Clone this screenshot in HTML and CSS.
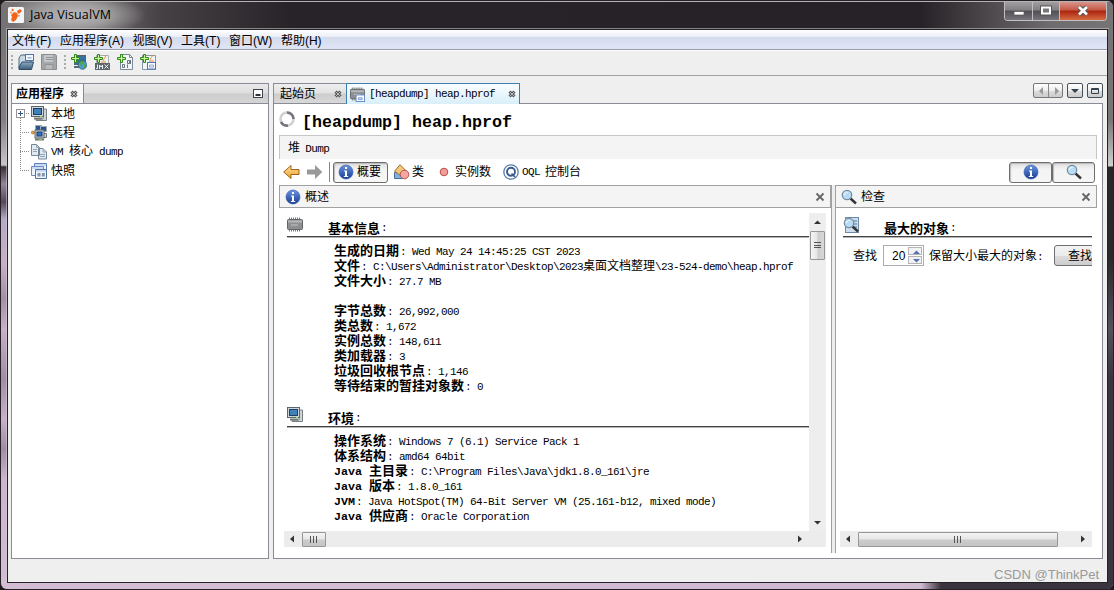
FILE: index.html
```html
<!DOCTYPE html>
<html lang="zh-CN">
<head>
    <meta charset="UTF-8">
    <title>Java VisualVM</title>
    <link rel="stylesheet" href="styles.css">
</head>
<body>
    <!-- shared icons -->
    <svg class="defs" width="0" height="0">
        <linearGradient id="blue" x1="0" y1="0" x2="0" y2="1"><stop offset="0" stop-color="#6c95df"/><stop offset="1" stop-color="#173b94"/></linearGradient>
        <linearGradient id="gold" x1="0" y1="0" x2="0" y2="1"><stop offset="0" stop-color="#ffe3a0"/><stop offset="1" stop-color="#ee9b25"/></linearGradient>
        <linearGradient id="steel" x1="0" y1="0" x2="0" y2="1"><stop offset="0" stop-color="#8cabc4"/><stop offset="1" stop-color="#3d5c78"/></linearGradient>
        <symbol id="i-info" viewBox="0 0 16 16">
            <circle cx="8" cy="8" r="7" fill="url(#blue)" stroke="#2b55ac" stroke-width=".6"/>
            <path d="M7 3h2v2H7zM6 6.500h3V12h1.200v1H5.800v-1H7V7.500H6z" fill="#fff"/>
        </symbol>
        <symbol id="i-search" viewBox="0 0 16 16">
            <path d="M9.500 9.500L15 14.500" stroke="#333" stroke-width="2.400"/>
            <circle cx="6" cy="6" r="4.700" fill="#b9dbf3" stroke="#7590a5" stroke-width="1.300"/>
            <path d="M3.500 6a2.500 2.500 0 0 1 3-2.500" stroke="#fff" fill="none"/>
        </symbol>
        <symbol id="i-close" viewBox="0 0 8 8">
            <path d="M1.500 1.500l5 5M6.500 1.500l-5 5" stroke="#555" stroke-width="3"/>
            <path d="M1.500 1.500l5 5M6.500 1.500l-5 5" stroke="#ccc" stroke-width=".9"/>
        </symbol>
        <symbol id="i-x" viewBox="0 0 10 10"><path d="M1.500 1.500l7 7M8.500 1.500l-7 7" stroke="#666" stroke-width="1.800"/></symbol>
        <symbol id="i-plus" viewBox="0 0 9 9"><path d="M3.500.5h2v3h3v2h-3v3h-2v-3h-3v-2h3z" fill="#c9f59a" stroke="#2c8a12"/></symbol>
        <symbol id="i-host" viewBox="0 0 16 16">
            <path d="M12 3h3.500v11.500H5V13h7z" fill="#cfd3d4" stroke="#7a8286"/>
            <rect x=".5" y=".5" width="12" height="10" fill="#d0d5d8" stroke="#5a666e"/>
            <rect x="2.500" y="2.500" width="8" height="6" fill="#3f82b8" stroke="#1c3e74"/>
            <path d="M3 12.500h8" stroke="#777" stroke-width="2"/><path d="M9 10h2v1H9z" fill="#6f2"/>
        </symbol>
        <symbol id="i-remote" viewBox="0 0 16 16">
            <rect x="4.500" y=".5" width="6" height="5" fill="#27558e" stroke="#a4abb0"/>
            <rect x="9.500" y="1.500" width="6" height="5" fill="#27558e" stroke="#a4abb0"/>
            <path d="M12 8.500h3.500v4H12" fill="#c9ced1" stroke="#777"/>
            <rect x="4" y="5" width="9" height="8" fill="#c4cace" stroke="#5b666d"/>
            <rect x="6" y="7" width="5" height="4" fill="#2f74b4" stroke="#1c3e74"/>
            <path d="M4 14.500h9" stroke="#777" stroke-width="2"/><path d="M8 14h3v1H8z" fill="#6d2"/>
            <path d="M1 7.500h3" stroke="#555"/><circle cx="1.800" cy="7.500" r="1.500" fill="#f2a43a" stroke="#99601a" stroke-width=".6"/>
        </symbol>
        <symbol id="i-dump" viewBox="0 0 16 16">
            <path d="M.5.5h5l3 3v8h-8zM7.500 4.500h4.500l3.500 3.500v7h-8z" fill="#e2e9ef" stroke="#71879c"/>
            <path d="M5.500.5v3h3M12 4.500V8h3.500M2 5.500h4M2 7.500h4M9 10.500h5M9 12.500h5" fill="none" stroke="#94a4b4"/>
        </symbol>
        <symbol id="i-snap" viewBox="0 0 16 16">
            <path d="M3.500.5h12v9h-12z" fill="#eef4fb" stroke="#5d80bd"/>
            <path d="M.5 3.500h12v9H.5z" fill="#eef4fb" stroke="#6d8cc0"/>
            <path d="M4.500 6.500h11v9h-11z" fill="#eef4fb" stroke="#54749f"/>
            <path d="M4 2h11M1 5h11M5 8h10" stroke="#a9c3e8"/><path d="M6.500 10h3v3.500h-3zM10.800 10h3v3.500h-3z" fill="#8298a9"/>
        </symbol>
        <symbol id="i-chip" viewBox="0 0 16 16">
            <path d="M2 1.500h12M2 13.500h12" stroke="#777" stroke-width="2" stroke-dasharray="1 1"/>
            <rect x=".5" y="2.500" width="15" height="10" rx="1" fill="#8d8f91" stroke="#626466"/>
            <path d="M1 4.500h14" stroke="#b5b7b8" stroke-width="2"/><path d="M4 8h7" stroke="#c4c4c4"/>
        </symbol>
        <symbol id="i-heap" viewBox="0 0 16 16">
            <use href="#i-chip" width="16" height="16"/>
            <rect x="6.500" y="8.500" width="9" height="7" fill="#fff" stroke="#6688c6"/><path d="M9 11.500h4v2H9z" fill="#dce9ff" stroke="#7797cd"/>
        </symbol>
    </svg>

    <div class="window">
        <div class="titlebar">
            <svg class="logo" width="16" height="16" viewBox="0 0 16 16">
                <rect width="16" height="16" rx="1.500" fill="#f2f6f7"/>
                <path d="M6 5l3 1 1 3-2 4-3 2-2-2 1-3-1-2z" fill="#f2641d"/>
                <path d="M9 4l3-2 2 2-2 2-2 1zM4 1.500l2 1-1 2-1.500-1zM10 8l2 .5-1 1.500z" fill="#f2641d"/>
                <circle cx="3" cy="5.500" r="1" fill="#f58a4e"/>
            </svg>
            <span class="title">Java VisualVM</span>
            <div class="win-buttons">
                <span class="win-btn min"><svg width="12" height="12"><rect x="1" y="6.500" width="10" height="3.500" fill="#fff" stroke="#555" stroke-width=".7"/></svg></span>
                <span class="win-btn max"><svg width="12" height="12"><rect x="1.500" y="2" width="9" height="7" fill="#555" stroke="#555" stroke-width="3"/><rect x="2" y="2.500" width="8" height="6" fill="#777" stroke="#fff" stroke-width="2"/></svg></span>
                <span class="win-btn close"><svg width="12" height="12"><path d="M2 2l8 7.500M10 2L2 9.500" stroke="#555" stroke-width="4.500"/><path d="M2 2l8 7.500M10 2L2 9.500" stroke="#fff" stroke-width="2.700"/></svg></span>
            </div>
        </div>

        <div class="middle">
            <div class="edge edge-left"></div>
            <div class="client">
                <div class="menubar">
                    <span>文件(F)</span><span>应用程序(A)</span><span>视图(V)</span><span>工具(T)</span><span>窗口(W)</span><span>帮助(H)</span>
                </div>
                <div class="toolbar">
                    <i class="grip"></i>
                    <svg width="16" height="16" viewBox="0 0 16 16">
                        <path d="M1 14V4l2-3h4l1 3h5v10z" fill="#cbd9e4" stroke="#4c6a82"/>
                        <rect x="7.500" y=".5" width="8" height="6" fill="#f2f7ff" stroke="#5374aa"/><path d="M9.500 3h4v1.500h-4z" fill="#9fb7dd"/>
                        <path d="M1 15.500V13l3-5h11.500l-2 7.500z" fill="url(#steel)" stroke="#2f4b64"/>
                    </svg>
                    <svg width="16" height="16" viewBox="0 0 16 16">
                        <path d="M.5.5h14l1 1v14H.5z" fill="#a4a7aa" stroke="#8b8e91"/>
                        <path d="M3 1h9v7H3z" fill="#c4c6c8"/><path d="M5 3.500h7M5 5.500h7" stroke="#94979a"/><path d="M4 10.500h8v5H4z" fill="#b8babc" stroke="#909396"/>
                    </svg>
                    <i class="grip second"></i>
                    <svg width="16" height="16" viewBox="0 0 16 16">
                        <rect x="3.500" y="1.500" width="11" height="9" fill="#39719d" stroke="#56636c"/><path d="M3 13h7" stroke="#5c6972" stroke-width="2"/>
                        <circle cx="11.500" cy="11" r="4.300" fill="#4f9cc6" stroke="#28587b" stroke-width=".7"/><path d="M9 8l3-1 1 2-2 2-1 2zM13 11l2-1v3l-2 1z" fill="#4fa83a"/>
                        <use href="#i-plus" width="9" height="9"/>
                    </svg>
                    <svg width="16" height="16" viewBox="0 0 16 16">
                        <path d="M2.500 1.500h12v13h-12z" fill="#f2f2f2" stroke="#a9adb0"/><path d="M10 7c-2-2 3-3 1-6M7 8h5" fill="none" stroke="#e48a36"/>
                        <path d="M1 9h15v7H1z" fill="#5e666d"/><path d="M3.500 10.500v4H2M5.500 15v-4l1.500 2 1.500-2v4M10.500 10.500l4 4M14.500 10.500l-4 4" fill="none" stroke="#fff" stroke-width=".9"/>
                        <use href="#i-plus" width="9" height="9"/>
                    </svg>
                    <svg width="16" height="16" viewBox="0 0 16 16">
                        <path d="M3.500.5h9l3 3v12h-12z" fill="#f3f5f6" stroke="#7c8b98"/><path d="M12.500.5v3h3" fill="none" stroke="#7c8b98"/>
                        <path d="M5.500 10.500h2v3h-2zM10.500 6.500h2v3h-2zM13.500 6v4M10.500 10.500v3.500" fill="none" stroke="#69747d"/>
                        <use href="#i-plus" width="9" height="9"/>
                    </svg>
                    <svg width="16" height="16" viewBox="0 0 16 16">
                        <path d="M2.500 1.500h13v14h-13z" fill="#f1f5fa" stroke="#8996a6"/><path d="M11 6c-2-2 2-2 1-5M9 7h5" fill="none" stroke="#e48a36"/>
                        <rect x="7.500" y="8.500" width="8" height="6.500" fill="#fff" stroke="#4c73b8"/><path d="M9.500 11h4v2h-4z" fill="#fff" stroke="#86a5d9"/>
                        <use href="#i-plus" width="9" height="9"/>
                    </svg>
                </div>

                <div class="workspace">
                    <div class="side">
                        <div class="side-head">
                            <div class="side-tab"><b>应用程序</b><svg width="8" height="8"><use href="#i-close"/></svg></div>
                            <svg class="minimize" width="10" height="9"><rect x=".5" y=".5" width="9" height="8" fill="#fff" stroke="#3b4450"/><path d="M2.500 6h5" stroke="#333" stroke-width="2"/></svg>
                        </div>
                        <div class="tree">
                            <div class="node"><i class="expander"></i><svg width="16" height="16"><use href="#i-host"/></svg><span>本地</span></div>
                            <div class="node"><svg width="16" height="16"><use href="#i-remote"/></svg><span>远程</span></div>
                            <div class="node"><svg width="16" height="16"><use href="#i-dump"/></svg><span class="sim">VM <em>核心</em> dump</span></div>
                            <div class="node"><svg width="16" height="16"><use href="#i-snap"/></svg><span>快照</span></div>
                        </div>
                    </div>

                    <div class="main">
                        <div class="tabs">
                            <div class="tab start"><span>起始页</span><svg width="8" height="8"><use href="#i-close"/></svg></div>
                            <div class="tab active"><svg width="15" height="15"><use href="#i-heap"/></svg><span class="sim">[heapdump] heap.hprof</span><svg width="8" height="8"><use href="#i-close"/></svg></div>
                            <div class="tab-ctl">
                                <span class="pair"><svg width="14" height="13"><path d="M9 3v8L5 7z" fill="#999"/></svg><svg width="14" height="13"><path d="M6 3v8l4-4z" fill="#999"/></svg></span>
                                <span><svg width="14" height="13"><path d="M3 5h8L7 9z" fill="#34424e"/></svg></span>
                                <span><svg width="14" height="13"><path d="M3.500 4.500h7v5h-7zM3 5.500h8" fill="none" stroke="#34424e"/></svg></span>
                            </div>
                        </div>
                        <div class="view">
                            <div class="view-title">
                                <svg width="16" height="16" viewBox="0 0 16 16" fill="none" stroke-width="2.600"><circle cx="8" cy="8" r="6.500" stroke="#d0d0d4"/><path d="M8 1.500A6.500 6.500 0 0 1 14.500 8M9 14.500A6.500 6.500 0 0 1 2 11" stroke="#77777d"/></svg>
                                <h1>[heapdump] heap.hprof</h1>
                            </div>
                            <div class="dump-bar">堆 <span class="sim">Dump</span></div>
                            <div class="nav">
                                <svg class="back" width="17" height="16"><path d="M.7 8L8 1.500V5.500h8v5H8v4z" fill="url(#gold)" stroke="#9d6418"/></svg>
                                <svg class="fwd" width="17" height="16"><path d="M16.300 8L9 1v4.500H1v5h8V15z" fill="#999"/></svg>
                                <i class="sep"></i>
                                <span class="btn on"><svg width="16" height="16"><use href="#i-info"/></svg><span>概要</span></span>
                                <span class="item classes"><svg width="17" height="16"><path d="M1.500 8.500h8v6h-8z" fill="#7fb1df" stroke="#44719e"/><path d="M7 .7l6 6-5 5-6.500-4.500z" fill="#f3c67b" stroke="#a3712b"/><circle cx="11.500" cy="10.500" r="4.300" fill="#f7a5a0" stroke="#b0504b"/></svg><span>类</span></span>
                                <span class="item inst"><svg width="10" height="10"><circle cx="5" cy="5" r="3.800" fill="#f59c98" stroke="#b0504b"/></svg><span>实例数</span></span>
                                <span class="item oql"><svg width="16" height="16"><circle cx="8" cy="8" r="7.200" fill="#fff" stroke="#557cac" stroke-width="1.300"/><circle cx="8" cy="7.700" r="4" fill="none" stroke="#3a5c8c" stroke-width="1.900"/><path d="M8.500 9.500l3.500 3.500" stroke="#3a5c8c" stroke-width="1.700"/></svg><span class="sim">OQL</span><span>控制台</span></span>
                                <span class="btn on right first"><svg width="16" height="16"><use href="#i-info"/></svg></span>
                                <span class="btn on right"><svg width="16" height="16"><use href="#i-search"/></svg></span>
                            </div>

                            <div class="split">
                                <div class="panel overview">
                                    <div class="panel-head"><svg width="16" height="16"><use href="#i-info"/></svg><span>概述</span><svg class="x" width="10" height="10"><use href="#i-x"/></svg></div>
                                    <div class="scroll">
                                        <div class="row">
                                            <div class="text">
                                                <div class="sec-head"><svg width="16" height="16"><use href="#i-chip"/></svg><b>基本信息</b>:</div>
                                                <p><b>生成的日期</b>: Wed May 24 14:45:25 CST 2023</p>
                                                <p><b>文件</b>: C:\Users\Administrator\Desktop\2023<em>桌面文档整理</em>\23-524-demo\heap.hprof</p>
                                                <p><b>文件大小</b>: 27.7 MB</p>
                                                <p>&nbsp;</p>
                                                <p><b>字节总数</b>: 26,992,000</p>
                                                <p><b>类总数</b>: 1,672</p>
                                                <p><b>实例总数</b>: 148,611</p>
                                                <p><b>类加载器</b>: 3</p>
                                                <p><b>垃圾回收根节点</b>: 1,146</p>
                                                <p><b>等待结束的暂挂对象数</b>: 0</p>
                                                <div class="sec-head env"><svg width="16" height="16"><use href="#i-host"/></svg><b>环境</b>:</div>
                                                <p><b>操作系统</b>: Windows 7 (6.1) Service Pack 1</p>
                                                <p><b>体系结构</b>: amd64 64bit</p>
                                                <p><b><i>Java </i>主目录</b>: C:\Program Files\Java\jdk1.8.0_161\jre</p>
                                                <p><b><i>Java </i>版本</b>: 1.8.0_161</p>
                                                <p><b><i>JVM</i></b>: Java HotSpot(TM) 64-Bit Server VM (25.161-b12, mixed mode)</p>
                                                <p><b><i>Java </i>供应商</b>: Oracle Corporation</p>
                                            </div>
                                            <div class="vbar">
                                                <svg width="17" height="17"><path d="M5 11h7L8.500 7.500z" fill="#333"/></svg>
                                                <div class="thumb"><i></i></div>
                                                <svg class="end" width="17" height="17"><path d="M5 7h7l-3.500 3.500z" fill="#333"/></svg>
                                            </div>
                                        </div>
                                        <div class="hbar">
                                            <svg width="18" height="16"><path d="M10 4.500v7L6 8z" fill="#333"/></svg>
                                            <div class="thumb"><i></i></div>
                                            <svg class="end" width="17" height="16"><path d="M6 4.500v7L10 8z" fill="#333"/></svg>
                                        </div>
                                    </div>
                                </div>
                                <div class="divider"></div>
                                <div class="panel inspect">
                                    <div class="panel-head"><svg width="16" height="16"><use href="#i-search"/></svg><span>检查</span><svg class="x" width="10" height="10"><use href="#i-x"/></svg></div>
                                    <div class="scroll">
                                        <div class="text">
                                            <div class="sec-head"><svg width="16" height="16"><rect x="2.500" y=".5" width="13" height="15" fill="#cfdeec" stroke="#6d89a5"/><path d="M10 4h4M11 7h3M11 10h3" stroke="#54789b"/><use href="#i-search" width="16" height="16"/></svg><b>最大的对象</b>:</div>
                                            <div class="find">
                                                <span>查找</span>
                                                <div class="spinner">20<div class="arrows"><svg width="14" height="8"><path d="M4 6h7L7.500 2.500z" fill="#5570b4"/></svg><svg width="14" height="8"><path d="M4 2h7L7.500 5.500z" fill="#5570b4"/></svg></div></div>
                                                <span>保留大小最大的对象<tt>:</tt></span>
                                                <div class="find-btn">查找</div>
                                            </div>
                                        </div>
                                        <div class="hbar">
                                            <svg width="18" height="16"><path d="M10 4.500v7L6 8z" fill="#333"/></svg>
                                            <div class="thumb"><i></i></div>
                                            <svg class="end" width="17" height="16"><path d="M6 4.500v7L10 8z" fill="#333"/></svg>
                                        </div>
                                    </div>
                                </div>
                            </div>
                        </div>
                    </div>
                </div>
                <div class="status">CSDN @ThinkPet</div>
            </div>
            <div class="edge edge-right"></div>
        </div>
        <div class="bottom"></div>
    </div>
</body>
</html>
```
FILE: styles.css
```css
* {
    box-sizing: border-box;
}

body {
    margin: 0;
    width: 1114px;
    height: 590px;
    overflow: hidden;
    background: #1d1a1e;
    color: #000;
    font: 12px/15px "Liberation Sans", "Noto Sans CJK SC", sans-serif;
}

svg {
    flex: none;
    display: block;
}

.defs {
    position: absolute;
}

em, i {
    font-style: normal;
}

/* Window frame */
.window {
    display: flex;
    flex-direction: column;
    width: 1114px;
    height: 590px;
    border: 1px solid #242026;
    border-radius: 7px;
    overflow: hidden;
    background: #777;
}

.titlebar {
    display: flex;
    height: 28px;
    padding: 0 7px;
    border-top: 1px solid #b5b3b4;
    background: radial-gradient(ellipse 70px 22px at 75px 13px, #bbb9ba 0, rgba(170,168,169,.8) 50%, transparent 100%),
        linear-gradient(90deg, #767274 0, #807d7e 70px, #464145 160px, #282328 290px, #272227 920px, #6f6c6e 1050px, #777476 100%);
}

.logo {
    margin-top: 5px;
}

.title {
    margin: 5px 0 0 6px;
    font: 12.5px/16px "Open Sans", "Noto Sans", sans-serif;
    letter-spacing: .1px;
}

.win-buttons {
    display: flex;
    height: 19px;
    margin-left: auto;
    margin-right: -1px;
    border: 1px solid #c1bfc1;
    border-top: 0;
    border-radius: 0 0 4px 4px;
    overflow: hidden;
}

.win-btn {
    display: flex;
    align-items: center;
    justify-content: center;
    width: 27px;
    background: linear-gradient(#a09d9f, #828083 45%, #514f54 50%, #77757b);
}

.win-btn + .win-btn {
    border-left: 1px solid #c1bfc1;
}

.win-btn.close {
    width: 47px;
    background: linear-gradient(#d8958c, #c75844 45%, #ab240e 50%, #d56c43);
}

.middle {
    display: flex;
    height: 554px;
}

.edge {
    width: 6px;
}

.edge-left {
    background: linear-gradient(#777476 0, #827d80 90px, #c7c3c6 136px, #382f38 138px, #94859a 155px, #54485a 173px, #b5a9c8 190px, #c8adc8 235px, #a58fa5 270px, #c9afc9 300px, #a38ca5 350px, #c9afc9 390px, #a18ba3 420px, #cdb3cf 450px, #d4bcd5 100%);
}

.edge-right {
    width: 5px;
    background: linear-gradient(#777476 0, #777476 90px, #d0d0d0 137px, #29252b 138px, #2d282f 230px, #55505a 300px, #3b343e 350px, #3b343e 100%);
}

.bottom {
    height: 6px;
    background: linear-gradient(90deg, #d2bdd4 0, #cfbad1 920px, #3b343e 940px);
}

/* Client area */
.client {
    display: flex;
    flex-direction: column;
    width: 1101px;
    border: 1px solid #242127;
    outline: 1px solid rgba(210,205,210,.55);
    background: #efefef;
}

.menubar {
    display: flex;
    flex: none;
    gap: 8.6px;
    height: 20px;
    padding-left: 4px;
    border-bottom: 1px solid #999ba7;
    background: linear-gradient(#fff, #eaeef6 35%, #d4dbed 38%, #dfe5f6);
    line-height: 22px;
}

.toolbar {
    display: flex;
    flex: none;
    align-items: center;
    height: 26px;
    padding: 0 3px 2px;
    border-top: 1px solid #fff;
    border-bottom: 1px solid #a0a0a0;
}

.toolbar svg {
    margin-right: 6px;
}

.toolbar svg + svg {
    margin-left: 1px;
}

.grip {
    width: 2px;
    height: 15px;
    margin-right: 5px;
    background: repeating-linear-gradient(#aaa 0 2px, transparent 2px 4px);
}

.grip.second {
    margin-left: 1px;
    margin-right: 5px;
}

.workspace {
    display: flex;
    flex: none;
    gap: 4px;
    height: 483px;
    padding: 7px 3px 0;
}

/* Applications tree */
.side {
    width: 258px;
    height: 476px;
    border: 1px solid #898c95;
    background: #fff;
}

.side-head {
    display: flex;
    align-items: center;
    justify-content: space-between;
    height: 20px;
    padding-right: 5px;
    border-bottom: 1px solid #898c95;
    background: linear-gradient(#e9e9e9, #dedede 48%, #cdcdcd 52%, #d5d5d5);
}

.side-tab {
    display: flex;
    align-items: center;
    gap: 6px;
    width: 72px;
    height: 19px;
    padding-left: 4px;
    border-right: 1px solid #898c95;
    background: #fafafa;
}

.side-tab b {
    width: 48px;
    padding-top: 2px;
}

.tree {
    padding: 0 0 0 3px;
    background: repeating-linear-gradient(#888 0 1px, transparent 1px 2px) 8px 8px / 1px 59px no-repeat;
}

.node {
    display: flex;
    align-items: center;
    gap: 4px;
    height: 19px;
    padding-left: 16px;
    background: repeating-linear-gradient(90deg, #888 0 1px, transparent 1px 2px) 5px 9px / 10px 1px no-repeat;
}

.node span {
    padding-top: 2px;
}

.expander {
    width: 9px;
    height: 9px;
    margin: 0 2px 0 -15px;
    border: 1px solid #939393;
    background: linear-gradient(#36558f, #36558f) center / 5px 1px no-repeat, linear-gradient(#36558f, #36558f) center / 1px 5px no-repeat, #fff;
}

/* Fixed-pitch latin text, with CJK runs at full size */
.sim,
.text p,
.sec-head,
tt {
    font-family: "Liberation Mono", "Noto Sans CJK SC", monospace;
    font-size: 11px;
    letter-spacing: -.6px;
}

.sim em,
.text em {
    font-size: 12px;
    letter-spacing: 0;
}

/* Document tabs */
.main {
    display: flex;
    flex-direction: column;
    width: 830px;
    height: 476px;
}

.tabs {
    display: flex;
    height: 20px;
}

.tab {
    display: flex;
    align-items: center;
    height: 20px;
    border: 1px solid #898c95;
    border-bottom: 0;
}

.tab.start {
    width: 73px;
    padding-left: 6px;
    gap: 18px;
    border-right: 0;
    background: linear-gradient(#eee, #e2e2e2 48%, #cdcdcd 52%, #d8d8d8);
}

.tab.start span {
    padding-top: 2px;
}

.tab.active {
    position: relative;
    width: 174px;
    height: 21px;
    padding-left: 3px;
    gap: 4px;
    border-color: #3c7fb1;
    background: linear-gradient(#fafdff, #eaf6fc 50%, #d9eff9);
}

.tab.active .sim {
    width: 135px;
    padding-top: 1px;
    white-space: nowrap;
}

.tab-ctl {
    display: flex;
    gap: 4px;
    height: 15px;
    margin-left: auto;
}

.tab-ctl > span {
    display: flex;
    border: 1px solid #454f59;
    border-radius: 2px;
    background: linear-gradient(#fff, #eee 50%, #ddd 52%, #ccc);
}

.tab-ctl > .pair {
    border-color: #777;
}

.pair svg + svg {
    border-left: 1px solid #888;
}

.view {
    flex: 1;
    padding: 0 5px;
    border: 1px solid #898c95;
    background: #fff;
}

.view-title {
    display: flex;
    gap: 7px;
    height: 31px;
    padding-top: 7px;
}

.view-title h1 {
    margin: 3px 0 0;
    font: bold 16.667px/18px "Liberation Mono", monospace;
}

.dump-bar {
    height: 24px;
    padding: 5px 8px 0;
    border: 1px solid #c6c6c6;
    border-bottom: 0;
    background: #f4f4f4;
}

.dump-bar .sim {
    margin-left: 2px;
}

.nav {
    display: flex;
    align-items: center;
    height: 26px;
}

.back {
    margin-left: 4px;
}

.fwd {
    margin-left: 6px;
}

.sep {
    width: 1px;
    height: 20px;
    margin: 0 3px 0 6px;
    background: #888;
}

.btn {
    display: flex;
    align-items: center;
    justify-content: center;
    gap: 3px;
    width: 55px;
    height: 21px;
    border: 1px solid #6e6e6e;
    border-radius: 3px;
    background: linear-gradient(#dedede, #f4f4f4 35%, #f6f6f6);
    box-shadow: inset 1px 1px 1px #bbb;
}

.nav > .btn:not(.right) {
    padding-right: 2px;
}

.btn span,
.item span {
    padding-top: 1px;
}

.btn.right {
    width: 43px;
    margin-right: 2px;
}

.btn.right.first {
    margin-left: auto;
    margin-right: 0;
}

.item {
    display: flex;
    align-items: center;
    gap: 3px;
}

.classes {
    margin-left: 5px;
}

.classes svg {
    margin-right: -1px;
}

.inst {
    margin-left: 15px;
    gap: 6px;
}

.oql {
    margin-left: 12px;
    gap: 3px;
}

.oql .sim {
    margin-right: 2px;
}

/* Overview and inspect panels */
.split {
    display: flex;
    height: 368px;
}

.panel-head {
    display: flex;
    align-items: center;
    gap: 4px;
    height: 23px;
    padding: 0 5px;
    border: 1px solid #a0a0a0;
    background: #f4f4f4;
}

.panel-head span {
    padding-top: 2px;
}

.panel-head .x {
    margin-left: auto;
}

.overview {
    width: 552px;
}

.divider {
    width: 5px;
    border: 1px solid #a0a0a0;
    border-width: 0 1px;
    background: #eee;
}

.inspect {
    width: 261px;
}

.inspect .panel-head {
    border-left: 0;
}

.scroll {
    padding: 5px 5px 0;
}

.row {
    display: flex;
}

.text {
    height: 318px;
    overflow: hidden;
}

.row .text {
    width: 525px;
    padding: 4px 0 0 3px;
}

.sec-head {
    display: flex;
    height: 20px;
    margin-bottom: 6px;
    border-bottom: 1px solid #444;
    box-shadow: 0 1px #b5b5b5;
    line-height: 23px;
}

.sec-head svg {
    margin: 0 25px 0 0;
}

.sec-head.env {
    margin-top: 14px;
}

.text p {
    height: 15px;
    margin: 0;
    padding-left: 47px;
    white-space: pre;
}

.text b {
    margin-right: 1px;
    font: bold 13px/15px "Liberation Sans", "Noto Sans CJK SC", sans-serif;
    letter-spacing: 0;
}

.text .sec-head b {
    line-height: 23px;
}

.text b i {
    font: bold 11.667px/15px "Liberation Mono", monospace;
}

/* Scrollbars */
.vbar {
    display: flex;
    flex-direction: column;
    width: 17px;
    background: #eee;
}

.vbar .thumb {
    width: 15px;
    height: 29px;
    margin: 1px 1px 0;
    background: linear-gradient(90deg, #f4f4f4, #e6e6e6 48%, #ccc 52%, #d8d8d8);
}

.vbar .thumb i {
    width: 7px;
    height: 8px;
    background: repeating-linear-gradient(#555 0 1px, transparent 1px 2.5px);
}

.vbar .end {
    margin-top: auto;
}

.thumb {
    display: flex;
    align-items: center;
    justify-content: center;
    border: 1px solid #979797;
    border-radius: 1px;
}

.hbar {
    display: flex;
    align-items: center;
    height: 16px;
    background: #ececec;
}

.hbar .thumb {
    width: 24px;
    height: 15px;
    background: linear-gradient(#f4f4f4, #e6e6e6 48%, #ccc 52%, #c4c4c4);
}

.hbar .thumb i {
    width: 8px;
    height: 7px;
    background: repeating-linear-gradient(90deg, #555 0 1px, transparent 1px 3px);
}

.hbar .end {
    margin-left: auto;
}

.row + .hbar {
    padding-right: 17px;
}

.inspect .scroll {
    padding-left: 4px;
}

.inspect .text {
    padding: 4px 0 0 3px;
}

.inspect .hbar .thumb {
    width: 200px;
}

.find {
    display: flex;
    align-items: center;
    height: 25px;
    padding-left: 10px;
    white-space: nowrap;
}

.find > span {
    padding-top: 2px;
}

.spinner {
    display: flex;
    flex: none;
    width: 41px;
    height: 21px;
    margin: 0 5px 0 6px;
    padding-left: 8px;
    border: 1px solid #a9acb2;
    line-height: 20px;
}

.arrows {
    display: flex;
    flex-direction: column;
    gap: 1px;
    margin: 1px 1px 1px auto;
}

.arrows svg {
    border: 1px solid #b5b5b5;
    background: #f2f2f2;
}

.find-btn {
    flex: none;
    width: 60px;
    height: 21px;
    margin-left: 11px;
    padding-left: 13px;
    border: 1px solid #707070;
    border-radius: 3px;
    background: linear-gradient(#f3f3f3, #ebebeb 50%, #ddd 51%, #cdcdcd);
    line-height: 21px;
}

.status {
    height: 23px;
    padding: 8px 8px 0 0;
    color: #999;
    font: 13px/16px "Liberation Sans", sans-serif;
    text-align: right;
}
```
